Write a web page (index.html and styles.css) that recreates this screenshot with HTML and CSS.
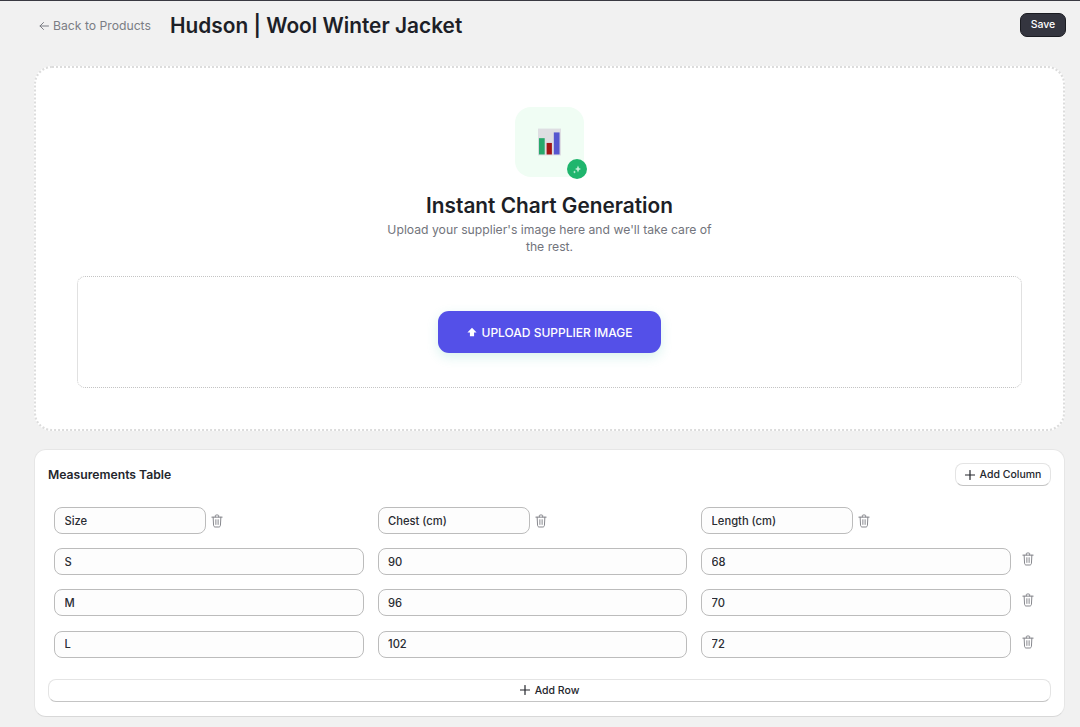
FILE: index.html
```html
<!DOCTYPE html>
<html lang="en">
<head>
<meta charset="utf-8">
<title>Hudson | Wool Winter Jacket</title>
<link rel="stylesheet" href="styles.css">
</head>
<body>
<svg class="sprite" width="0" height="0" aria-hidden="true">
  <symbol id="trash" viewBox="0 0 14 16">
    <path d="M1 3.5h12M5 3.3V1.9c0-.5.4-.9.9-.9h2.200c.5 0 .9.4.9.9v1.400M2.500 3.500l.5 9.600c0 1 .8 1.900 1.800 1.900h4.400c1 0 1.800-.9 1.800-1.900l.5-9.600M5.700 6.500v5.500M8.300 6.500v5.500" fill="none" stroke="currentColor" stroke-width="1.100" stroke-linecap="round" stroke-linejoin="round"/>
  </symbol>
  <symbol id="plus" viewBox="0 0 10 10">
    <path d="M5 .5v9M.5 5h9" fill="none" stroke="currentColor" stroke-width="1.200" stroke-linecap="round"/>
  </symbol>
</svg>
<header class="topbar">
  <a class="back" href="#"><svg class="back-arrow" viewBox="0 0 10 10" aria-hidden="true"><path d="M9.500 5H1M4.500 1.500 1 5l3.500 3.500" fill="none" stroke="currentColor" stroke-width="1" stroke-linecap="round" stroke-linejoin="round"/></svg>Back to Products</a>
  <h1 class="title">Hudson | Wool Winter Jacket</h1>
  <button class="save" type="button">Save</button>
</header>
<main class="page">
  <section class="upload-card">
    <div class="tile">
      <svg class="chart" viewBox="0 0 24 28" aria-hidden="true">
        <rect width="24" height="28" fill="#dedee2"/>
        <rect x="1" y="10" width="6" height="17" fill="#27a86b"/>
        <rect x="9" y="15" width="5.500" height="12" fill="#a31515"/>
        <rect x="16.500" y="4" width="6" height="23" fill="#5656cf"/>
      </svg>
      <span class="badge"><svg viewBox="0 0 10 10" aria-hidden="true"><path d="M6 1.500 7 4l2 1-2 1-1 2.500L5 6 3 5l2-1zM2.500 6.500l.5 1 1 .5-1 .5-.5 1-.5-1-1-.5 1-.5z" fill="#bdeed4"/></svg></span>
    </div>
    <h2 class="heading">Instant Chart Generation</h2>
    <p class="lead">Upload your supplier's image here and we'll take care of the rest.</p>
    <div class="dropzone">
      <button class="upload-btn" type="button"><svg class="upload-icon" viewBox="0 0 12 12" aria-hidden="true"><path d="M6 1 11.500 6.500H8.500V11h-5V6.500H.5z" fill="#fff"/></svg>UPLOAD SUPPLIER IMAGE</button>
    </div>
  </section>
  <section class="table-card">
    <div class="table-head">
      <h3 class="table-title">Measurements Table</h3>
      <button class="ghost add-col" type="button"><svg class="plus"><use href="#plus"/></svg>Add Column</button>
    </div>
    <div class="grid">
      <div class="head-cell"><input class="field head-field" value="Size"><svg class="trash"><use href="#trash"/></svg></div>
      <div class="head-cell"><input class="field head-field" value="Chest (cm)"><svg class="trash"><use href="#trash"/></svg></div>
      <div class="head-cell"><input class="field head-field" value="Length (cm)"><svg class="trash"><use href="#trash"/></svg></div>
      <span></span>
      <input class="field" value="S"><input class="field" value="90"><input class="field" value="68"><svg class="trash row-trash"><use href="#trash"/></svg>
      <input class="field" value="M"><input class="field" value="96"><input class="field" value="70"><svg class="trash row-trash"><use href="#trash"/></svg>
      <input class="field" value="L"><input class="field" value="102"><input class="field" value="72"><svg class="trash row-trash"><use href="#trash"/></svg>
    </div>
    <button class="ghost add-row" type="button"><svg class="plus"><use href="#plus"/></svg>Add Row</button>
  </section>
</main>
</body>
</html>
```
FILE: styles.css
```css
* { box-sizing: border-box; }
html, body { margin: 0; height: 100%; overflow: hidden; }
body {
  background: #f1f1f1;
  border-top: 1px solid #3a3a42;
  font-family: Inter, "Liberation Sans", sans-serif;
  color: #202228;
}
.sprite { display: block; }
.topbar {
  display: flex;
  align-items: center;
  height: 49px;
  padding: 0 14px 0 39px;
}
.back {
  display: flex;
  align-items: center;
  gap: 4px;
  width: 131px;
  font-size: 12.2px;
  color: #7b7d84;
  text-decoration: none;
}
.back-arrow { width: 10px; height: 10px; }
.title {
  margin: 0;
  font-size: 20.85px;
  font-weight: 600;
  color: #1d1f27;
}
.save {
  margin-left: auto;
  margin-top: -2px;
  width: 46px;
  height: 24px;
  padding: 0;
  border: 1px solid #1a1b21;
  border-radius: 7px;
  background: #34353f;
  color: #fff;
  font: 500 10.5px Inter, sans-serif;
}
.page {
  display: flex;
  flex-direction: column;
  gap: 18px;
  padding: 16px 15px 0 34px;
}
.upload-card {
  display: flex;
  flex-direction: column;
  align-items: center;
  height: 365px;
  padding: 39px 41px 0 41px;
  background: #fff;
  border: 2px dotted #dcdcdc;
  border-radius: 18px;
}
.tile {
  position: relative;
  width: 69px;
  height: 70px;
  display: flex;
  align-items: center;
  justify-content: center;
  background: #f0fdf4;
  border-radius: 16px;
}
.chart { width: 23px; height: 28px; }
.badge {
  position: absolute;
  right: -3px;
  bottom: -2px;
  width: 20px;
  height: 20px;
  display: flex;
  align-items: center;
  justify-content: center;
  background: #1fb56d;
  border-radius: 50%;
}
.badge svg { width: 10px; height: 10px; }
.heading {
  margin: 15px 0 0;
  font-size: 20.8px;
  line-height: 27px;
  font-weight: 600;
  color: #1d1f27;
}
.lead {
  width: 330px;
  margin: 2px 0 0;
  font-size: 12.2px;
  line-height: 17px;
  text-align: center;
  color: #72747c;
}
.dropzone {
  align-self: stretch;
  display: flex;
  align-items: center;
  justify-content: center;
  height: 112px;
  margin-top: 21px;
  border: 1px dotted #c4c4c4;
  border-radius: 8px;
}
.upload-btn {
  display: flex;
  align-items: center;
  justify-content: center;
  gap: 5px;
  width: 223px;
  height: 42px;
  border: 0;
  border-radius: 11px;
  background: #5450e8;
  box-shadow: 0 4px 12px rgba(60, 190, 170, .2);
  color: #fff;
  font: 500 12px Inter, sans-serif;
}
.upload-icon { width: 10px; height: 10px; }
.table-card {
  height: 268px;
  padding: 13px 13px 0 13px;
  background: #fff;
  border: 1px solid #e6e6e6;
  border-bottom-color: #d8d8d8;
  border-radius: 12px;
}
.table-head {
  display: flex;
  align-items: center;
  justify-content: space-between;
}
.table-title {
  margin: 0;
  font-size: 12.2px;
  font-weight: 600;
  color: #24262c;
}
.ghost {
  display: flex;
  align-items: center;
  justify-content: center;
  gap: 5px;
  height: 23px;
  padding: 0;
  background: #fff;
  border: 1px solid #e4e4e4;
  border-bottom-color: #c4c4c4;
  border-radius: 8px;
  color: #24262c;
  font: 500 10.5px Inter, sans-serif;
}
.add-col { width: 96px; }
.add-row { width: 100%; margin-top: 21px; }
.plus { width: 10px; height: 10px; }
.grid {
  display: grid;
  grid-template-columns: repeat(3, 309.500px) 24px;
  column-gap: 14px;
  row-gap: 14.2px;
  align-items: center;
  margin: 21px 0 0 6px;
}
.head-cell {
  display: flex;
  align-items: center;
  gap: 5px;
}
.field {
  width: 100%;
  height: 27px;
  padding: 0 9.500px;
  background: #fdfdfd;
  border: 1px solid #bcbcbc;
  border-radius: 8px;
  color: #2a2c32;
  font: 500 11.2px Inter, sans-serif;
}
.head-field { width: 152px; flex: none; }
.trash { width: 12px; height: 14px; color: #7f8187; flex: none; }
.row-trash { margin: -5px 0 0 -3px; }
```
